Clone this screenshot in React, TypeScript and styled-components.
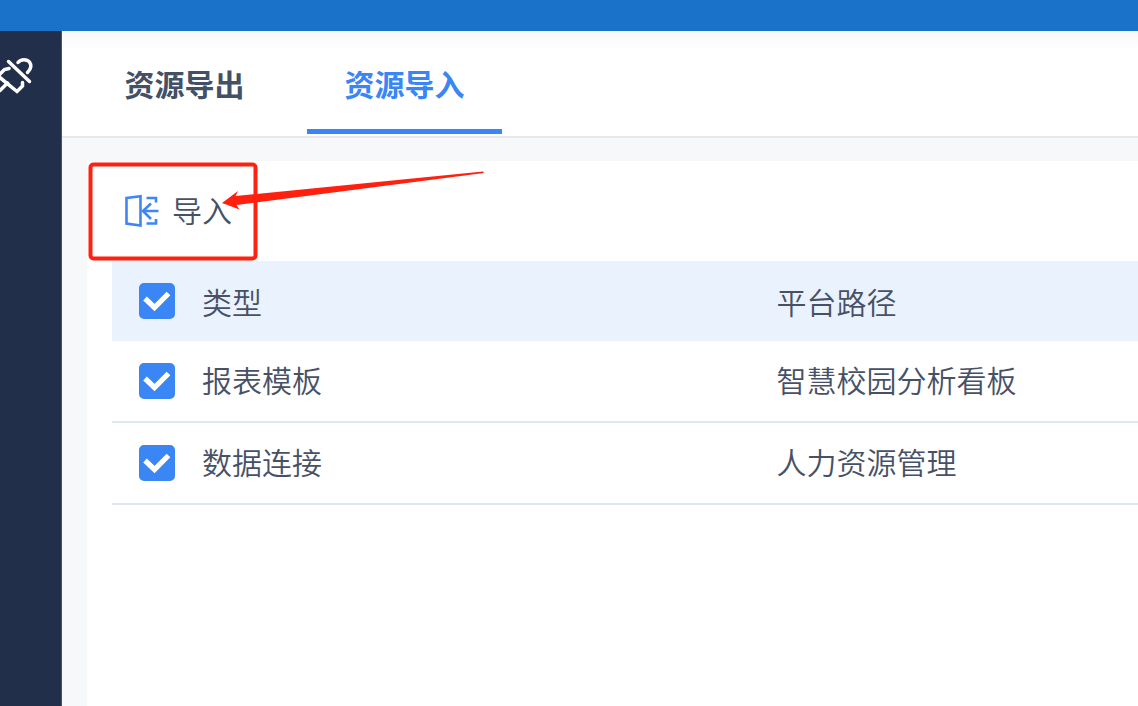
import React, { useState } from "react";
import styled, { createGlobalStyle } from "styled-components";

const GlobalStyle = createGlobalStyle`
  *, *::before, *::after { box-sizing: border-box; }
  html, body, #root { height: 100%; }
  body {
    margin: 0;
    color: #475166;
    background: #f6f8fa;
    font: 350 30px/40px "Noto Sans CJK SC", sans-serif;
  }
  button { font: inherit; color: inherit; background: none; border: 0; padding: 0; cursor: pointer; }
`;

const Page = styled.div`
  display: flex;
  flex-direction: column;
  min-height: 100%;
  overflow: hidden;
`;

const TopBar = styled.header`
  height: 31px;
  background: #1a73c8;
`;

const Body = styled.div`
  display: flex;
  flex: 1;
`;

const Sidebar = styled.aside`
  flex: 0 0 62px;
  padding-top: 24px;
  background: #222f4b;
  border-right: 1px solid #4a556c;
`;

const SideButton = styled.button`
  display: block;
  color: #fff;
  svg { display: block; }
`;

const Main = styled.main`
  display: flex;
  flex: 1;
  flex-direction: column;
  min-width: 0;
`;

const Tabs = styled.nav`
  display: flex;
  gap: 25px;
  height: 107px;
  padding: 0 25px 2px;
  background: linear-gradient(#f7f7f7, #fff 18px);
  border-bottom: 2px solid #e7e9ed;
`;

const Tab = styled.button<{ $active?: boolean }>`
  width: 195px;
  padding-top: 6px;
  font-weight: 700;
  color: ${(p) => (p.$active ? "#3a86f5" : "#435065")};
  border-bottom: 5px solid ${(p) => (p.$active ? "#3a86f5" : "transparent")};
`;

const Panel = styled.section`
  flex: 1;
  margin: 23px 0 0 25px;
  padding-left: 25px;
  background: #fff;
`;

const Toolbar = styled.div`
  position: relative;
  display: flex;
  align-items: center;
  height: 100px;
  padding-left: 12px;
`;

const ToolButton = styled.button`
  display: flex;
  align-items: center;
  gap: 12px;
`;

const ToolLabel = styled.span`
  padding-bottom: 5px;
`;

const Callout = styled.svg`
  position: absolute;
  left: -25px;
  top: 0;
  pointer-events: none;
`;

const Table = styled.table`
  width: 100%;
  table-layout: fixed;
  border-spacing: 0;
  text-align: left;
`;

const CheckColumn = styled.col`
  width: 90px;
`;

const TypeColumn = styled.col`
  width: 56%;
`;

const HeadRow = styled.tr`
  height: 80px;
  background: #eaf2fe;
`;

const Row = styled.tr`
  height: 82px;
  > td { border-bottom: 2px solid #dce8f8; }
`;

const HeadCell = styled.th`
  padding: 0;
  font-weight: inherit;
`;

const Cell = styled.td`
  padding: 0 0 5px;
`;

const CheckCell = styled.td`
  padding: 0 0 0 27px;
`;

const CheckBox = styled.span`
  display: grid;
  width: 36px;
  height: 36px;
  > * { grid-area: 1 / 1; }
  svg { pointer-events: none; }
`;

const CheckInput = styled.input`
  appearance: none;
  width: 36px;
  height: 36px;
  margin: 0;
  background: #fff;
  border: 2px solid #3a86f5;
  border-radius: 5px;
  &:checked { background: #3a86f5; }
`;

const Check = ({ label, checked, onChange }: { label: string; checked: boolean; onChange: () => void }) => (
  <CheckBox>
    <CheckInput type="checkbox" aria-label={label} checked={checked} onChange={onChange} />
    {checked && (
      <svg width="36" height="36" viewBox="0 0 36 36" fill="none" aria-hidden="true">
        <path d="M6 15.500L15.500 24.500L29.500 10.500" stroke="#fff" strokeWidth="5.200" />
      </svg>
    )}
  </CheckBox>
);

const PlugIcon = () => (
  <svg width="36" height="44" viewBox="0 55 36 44" fill="none" stroke="currentColor" strokeWidth="3.500" strokeLinecap="round" aria-hidden="true">
    <path d="M8.500 61.500L29.500 81.500" />
    <path d="M18 62.500C21 58.500 27 59 29.500 62C32 65.500 31 69 27.500 72.500" />
    <path d="M9 68.500L4.500 69.500L-3 77" />
    <path d="M-2 76L17 91.500L22.500 86V82.500" />
    <path d="M7.500 83L0 90.500" />
  </svg>
);

const ImportIcon = () => (
  <svg width="36" height="34" viewBox="0 0 36 34" fill="none" stroke="#3f86f4" strokeWidth="2.600" aria-hidden="true">
    <path d="M2.500 4L16.500 2.200V31.500L2.500 29.500Z" />
    <path d="M22.500 4H32V8.500M22.500 29.500H32V25M34.500 17H18M27 9.500L19 17L27 25" />
  </svg>
);

const rows = [
  { type: "报表模板", path: "智慧校园分析看板" },
  { type: "数据连接", path: "人力资源管理" },
];

export default function App() {
  const [tab, setTab] = useState(1);
  const [checked, setChecked] = useState([true, true]);
  const all = checked.every(Boolean);

  return (
    <>
      <GlobalStyle />
      <Page>
        <TopBar />
        <Body>
          <Sidebar>
            <SideButton aria-label="plug"><PlugIcon /></SideButton>
          </Sidebar>
          <Main>
            <Tabs>
              {["资源导出", "资源导入"].map((name, i) => (
                <Tab key={name} $active={tab === i} onClick={() => setTab(i)}>{name}</Tab>
              ))}
            </Tabs>
            <Panel>
              <Toolbar>
                <ToolButton><ImportIcon /><ToolLabel>导入</ToolLabel></ToolButton>
                <Callout width="400" height="102" viewBox="87 161 400 102" aria-hidden="true">
                  <rect x="90.500" y="164.500" width="165" height="94" rx="3" fill="none" stroke="#ff2010" strokeWidth="4" />
                  <path d="M222 203L238 191L235.500 196L483 171.500L484 173L236.500 205L239.500 209.500Z" fill="#ff2010" />
                </Callout>
              </Toolbar>
              <Table>
                <colgroup><CheckColumn /><TypeColumn /><col /></colgroup>
                <thead>
                  <HeadRow>
                    <CheckCell><Check label="全选" checked={all} onChange={() => setChecked(checked.map(() => !all))} /></CheckCell>
                    <HeadCell scope="col">类型</HeadCell>
                    <HeadCell scope="col">平台路径</HeadCell>
                  </HeadRow>
                </thead>
                <tbody>
                  {rows.map((row, i) => (
                    <Row key={row.type}>
                      <CheckCell>
                        <Check label={row.type} checked={checked[i]} onChange={() => setChecked(checked.map((c, j) => (i === j ? !c : c)))} />
                      </CheckCell>
                      <Cell>{row.type}</Cell>
                      <Cell>{row.path}</Cell>
                    </Row>
                  ))}
                </tbody>
              </Table>
            </Panel>
          </Main>
        </Body>
      </Page>
    </>
  );
}
